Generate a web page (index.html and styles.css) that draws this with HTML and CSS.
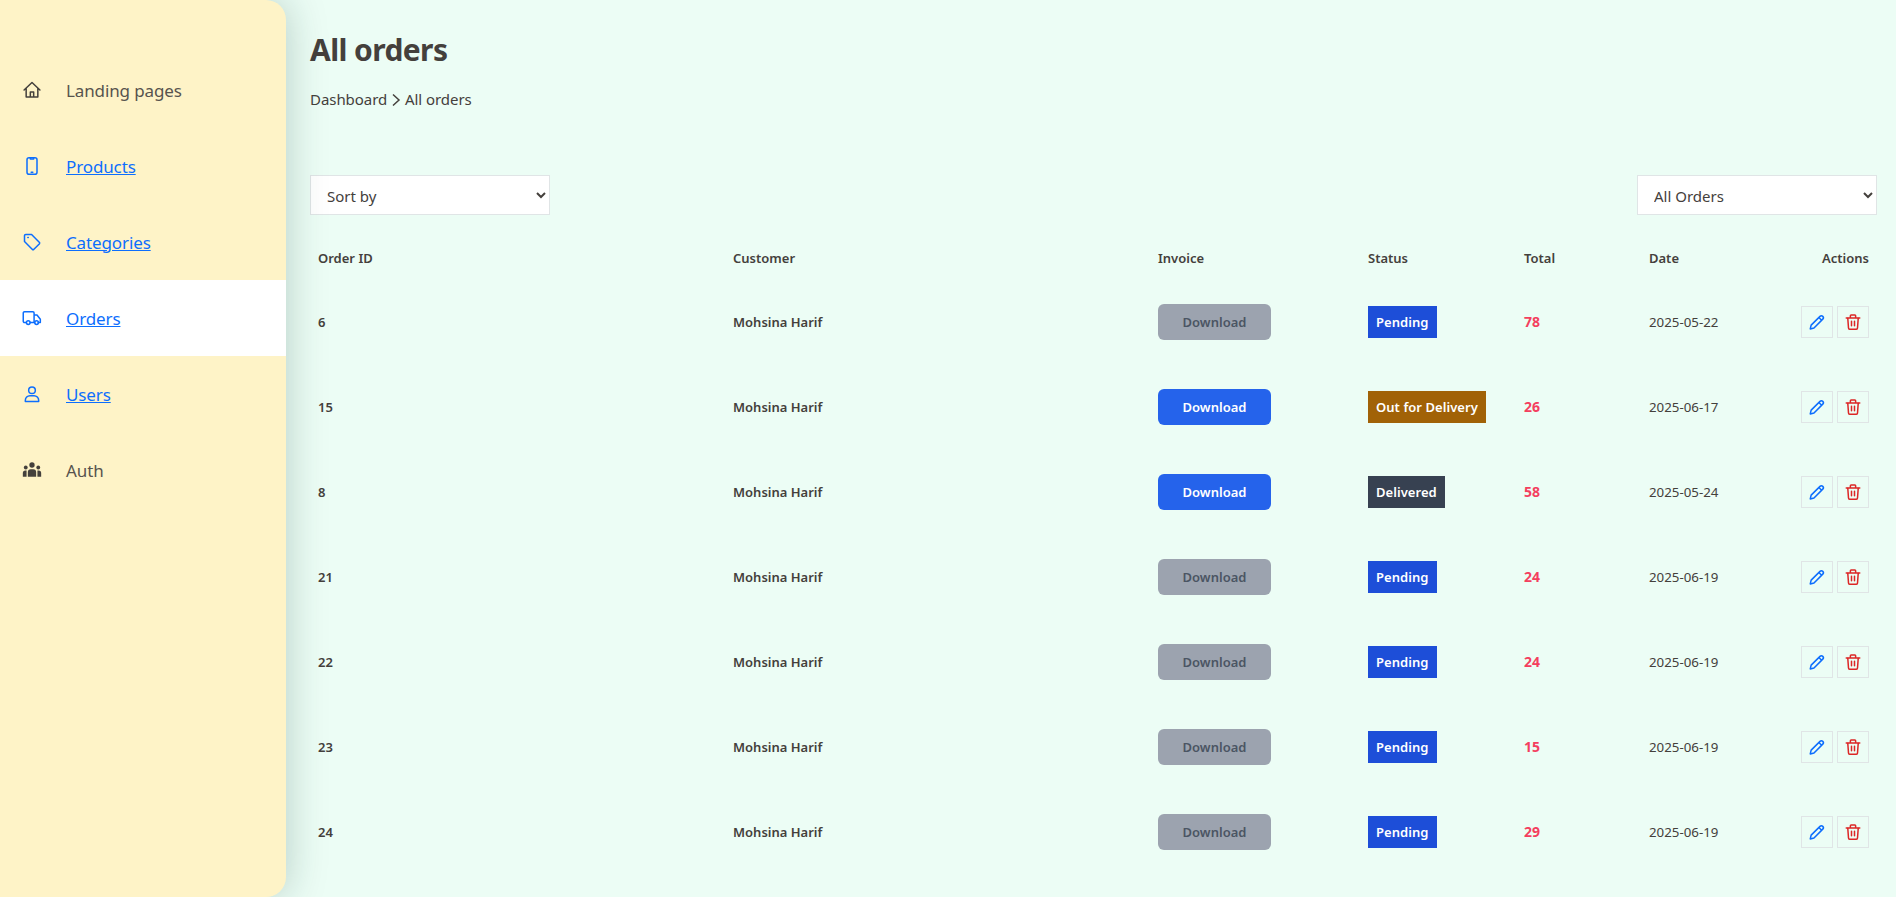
FILE: index.html
```html
<!DOCTYPE html>
<html lang="en">
<head>
    <meta charset="UTF-8">
    <title>All orders</title>
    <link rel="stylesheet" href="styles.css">
</head>
<body>
<svg class="icon-defs" xmlns="http://www.w3.org/2000/svg">
    <symbol id="i-home" viewBox="0 0 24 24"><path d="M2.500 12 12 3l9.500 9M5 10v10.500h14V10M10 20.500V14.500h4v6"/></symbol>
    <symbol id="i-phone" viewBox="0 0 24 24"><rect x="6" y="2" width="12" height="20" rx="2.500"/><path d="M10 2.500v1h4v-1M11 19.500h2"/></symbol>
    <symbol id="i-tag" viewBox="0 0 24 24"><path d="M3 4.500A1.500 1.500 0 0 1 4.500 3h7l9.500 9.500a1.500 1.500 0 0 1 0 1.500L14 21a1.500 1.500 0 0 1-1.500 0L3 11.500zM7 6.500h.5"/></symbol>
    <symbol id="i-truck" viewBox="0 0 24 24"><path d="M5 17.500H3a1.500 1.500 0 0 1-1.500-1.500V6A1.500 1.500 0 0 1 3 4.500h10A1.500 1.500 0 0 1 14.500 6v11.500H10M14.500 8.500H18l4 5v4h-2.500M14.500 17.500H15"/><circle cx="7.500" cy="17.500" r="2.200"/><circle cx="17.500" cy="17.500" r="2.200"/></symbol>
    <symbol id="i-user" viewBox="0 0 24 24"><circle cx="12" cy="7.500" r="4"/><path d="M4 21v-1.500A5.500 5.500 0 0 1 9.500 14h5a5.500 5.500 0 0 1 5.500 5.500V21z"/></symbol>
    <symbol id="i-group" viewBox="0 0 24 24"><circle cx="12" cy="6" r="3.200"/><circle cx="4.500" cy="9" r="2.300"/><circle cx="19.500" cy="9" r="2.300"/><path d="M7 20v-5.500a3.500 3.500 0 0 1 3.500-3.500h3a3.500 3.500 0 0 1 3.500 3.500V20zM1 20v-4.500A3 3 0 0 1 4 12.500h1.500v7.500zM23 20v-4.500a3 3 0 0 0-3-3h-1.500v7.500z"/></symbol>
    <symbol id="i-pencil" viewBox="0 0 24 24"><path d="M16 4.500a2.600 2.600 0 0 1 3.700 3.700L8 20l-5 1.200L4.200 16.200zM14.500 6l3.700 3.700"/></symbol>
    <symbol id="i-trash" viewBox="0 0 24 24"><path d="M3 6.500h18M5 6.500l1 13.500a1.500 1.500 0 0 0 1.500 1.500h9a1.500 1.500 0 0 0 1.500-1.500l1-13.500M8.500 6.500V3.500a1 1 0 0 1 1-1h5a1 1 0 0 1 1 1v3M10 11v6M14 11v6"/></symbol>
</svg>

<div class="layout">
    <aside class="sidebar">
        <ul class="menu">
            <li class="menu-item"><svg class="menu-icon"><use href="#i-home"/></svg><span>Landing pages</span></li>
            <li class="menu-item link"><svg class="menu-icon"><use href="#i-phone"/></svg><a href="#">Products</a></li>
            <li class="menu-item link"><svg class="menu-icon"><use href="#i-tag"/></svg><a href="#">Categories</a></li>
            <li class="menu-item link active"><svg class="menu-icon"><use href="#i-truck"/></svg><a href="#">Orders</a></li>
            <li class="menu-item link"><svg class="menu-icon"><use href="#i-user"/></svg><a href="#">Users</a></li>
            <li class="menu-item"><svg class="menu-icon solid"><use href="#i-group"/></svg><span>Auth</span></li>
        </ul>
    </aside>

    <main class="content">
        <h1 class="title">All orders</h1>
        <p class="crumbs">Dashboard <svg class="crumb-arrow" viewBox="0 0 10 14"><path d="M2 1.500 8 7l-6 5.500"/></svg> All orders</p>

        <div class="filters">
            <select class="filter"><option>Sort by</option></select>
            <select class="filter"><option>All Orders</option></select>
        </div>

        <table class="orders">
            <thead>
                <tr>
                    <th class="c-id">Order ID</th>
                    <th class="c-customer">Customer</th>
                    <th class="c-invoice">Invoice</th>
                    <th class="c-status">Status</th>
                    <th class="c-total">Total</th>
                    <th class="c-date">Date</th>
                    <th class="c-actions">Actions</th>
                </tr>
            </thead>
            <tbody>
                <tr>
                    <td class="strong">6</td><td class="strong">Mohsina Harif</td>
                    <td><button class="download off">Download</button></td>
                    <td><span class="badge pending">Pending</span></td>
                    <td class="total">78</td><td>2025-05-22</td>
                    <td class="c-actions"><button class="act edit"><svg><use href="#i-pencil"/></svg></button><button class="act del"><svg><use href="#i-trash"/></svg></button></td>
                </tr>
                <tr>
                    <td class="strong">15</td><td class="strong">Mohsina Harif</td>
                    <td><button class="download">Download</button></td>
                    <td><span class="badge out">Out for Delivery</span></td>
                    <td class="total">26</td><td>2025-06-17</td>
                    <td class="c-actions"><button class="act edit"><svg><use href="#i-pencil"/></svg></button><button class="act del"><svg><use href="#i-trash"/></svg></button></td>
                </tr>
                <tr>
                    <td class="strong">8</td><td class="strong">Mohsina Harif</td>
                    <td><button class="download">Download</button></td>
                    <td><span class="badge delivered">Delivered</span></td>
                    <td class="total">58</td><td>2025-05-24</td>
                    <td class="c-actions"><button class="act edit"><svg><use href="#i-pencil"/></svg></button><button class="act del"><svg><use href="#i-trash"/></svg></button></td>
                </tr>
                <tr>
                    <td class="strong">21</td><td class="strong">Mohsina Harif</td>
                    <td><button class="download off">Download</button></td>
                    <td><span class="badge pending">Pending</span></td>
                    <td class="total">24</td><td>2025-06-19</td>
                    <td class="c-actions"><button class="act edit"><svg><use href="#i-pencil"/></svg></button><button class="act del"><svg><use href="#i-trash"/></svg></button></td>
                </tr>
                <tr>
                    <td class="strong">22</td><td class="strong">Mohsina Harif</td>
                    <td><button class="download off">Download</button></td>
                    <td><span class="badge pending">Pending</span></td>
                    <td class="total">24</td><td>2025-06-19</td>
                    <td class="c-actions"><button class="act edit"><svg><use href="#i-pencil"/></svg></button><button class="act del"><svg><use href="#i-trash"/></svg></button></td>
                </tr>
                <tr>
                    <td class="strong">23</td><td class="strong">Mohsina Harif</td>
                    <td><button class="download off">Download</button></td>
                    <td><span class="badge pending">Pending</span></td>
                    <td class="total">15</td><td>2025-06-19</td>
                    <td class="c-actions"><button class="act edit"><svg><use href="#i-pencil"/></svg></button><button class="act del"><svg><use href="#i-trash"/></svg></button></td>
                </tr>
                <tr>
                    <td class="strong">24</td><td class="strong">Mohsina Harif</td>
                    <td><button class="download off">Download</button></td>
                    <td><span class="badge pending">Pending</span></td>
                    <td class="total">29</td><td>2025-06-19</td>
                    <td class="c-actions"><button class="act edit"><svg><use href="#i-pencil"/></svg></button><button class="act del"><svg><use href="#i-trash"/></svg></button></td>
                </tr>
            </tbody>
        </table>
    </main>
</div>
</body>
</html>
```

FILE: styles.css
```css
*{
    margin:0;
    padding:0;
    box-sizing:border-box;
}
html,body{
    width:100%;
    height:100%;
    overflow:hidden;
}
body{
    background:#ecfdf5;
    color:#44403c;
    font-family:"Noto Sans","Open Sans",sans-serif;
    font-size:14px;
}
.icon-defs{
    display:none;
}
.layout{
    display:flex;
    height:100%;
}

/* sidebar */
.sidebar{
    flex:0 0 286px;
    height:100%;
    padding-top:52px;
    background:#fef3c7;
    border-radius:0 20px 20px 0;
    box-shadow:0 0 40px rgba(17,60,50,.25);
    position:relative;
    z-index:2;
}
.menu{
    list-style:none;
}
.menu-item{
    display:flex;
    align-items:center;
    height:76px;
    padding-left:22px;
    font-size:17px;
    letter-spacing:-.12px;
    color:#57534e;
}
.menu-item a{
    color:#0d6efd;
    text-decoration:underline;
}
.menu-item.link{
    color:#0d6efd;
}
.menu-item.active{
    background:#fff;
}
.menu-icon{
    width:20px;
    height:20px;
    margin-right:24px;
    fill:none;
    stroke:currentColor;
    stroke-width:1.800;
    stroke-linejoin:round;
    stroke-linecap:round;
}
.menu-item:first-child .menu-icon{
    color:#44403c;
}
.menu-icon.solid{
    fill:#44403c;
    stroke:none;
}

/* main */
.content{
    flex:1;
    padding:30px 19px 0 24px;
    min-width:0;
}
.title{
    font-size:30px;
    line-height:40px;
    font-weight:700;
    letter-spacing:-.6px;
    color:#44403c;
}
.crumbs{
    margin-top:18px;
    font-size:15px;
    line-height:22px;
    letter-spacing:-.05px;
}
.crumb-arrow{
    width:10px;
    height:14px;
    vertical-align:-2px;
    fill:none;
    stroke:#44403c;
    stroke-width:1.500;
}
.filters{
    display:flex;
    justify-content:space-between;
    margin-top:65px;
}
.filter{
    width:240px;
    height:40px;
    padding:2px 12px 0;
    background:#fff;
    border:1px solid #e0e5e6;
    color:#44403c;
    font:15px "Noto Sans","Open Sans",sans-serif;
}

/* table */
.orders{
    width:100%;
    margin-top:22px;
    border-collapse:collapse;
    table-layout:fixed;
}
.orders th{
    height:42px;
    padding:0 8px;
    font-size:13px;
    font-weight:600;
    text-align:left;
}
.orders td{
    height:85px;
    padding:0 8px;
    font-size:13.300px;
}
.c-id{width:415px;}
.c-customer{width:425px;}
.c-invoice{width:210px;}
.c-status{width:156px;}
.c-total{width:125px;}
.orders .c-date{
    width:104px;
}
.orders .c-actions{
    text-align:right;
}
.orders .strong{
    font-size:13px;
    font-weight:600;
}
.orders .total{
    color:#f43f5e;
    font-size:14px;
    font-weight:700;
}
.download{
    width:113px;
    height:36px;
    border:0;
    border-radius:6px;
    background:#2563eb;
    color:#fff;
    font:600 13px "Noto Sans","Open Sans",sans-serif;
}
.download.off{
    background:#9ca3af;
    color:#4b5563;
}
.badge{
    display:inline-block;
    height:32px;
    padding:0 8px;
    color:#fff;
    font-size:13px;
    font-weight:600;
    letter-spacing:.05px;
    line-height:32px;
}
.pending{background:#1d4ed8;}
.out{background:#a16207;}
.delivered{background:#374151;}
.act{
    display:inline-flex;
    align-items:center;
    justify-content:center;
    width:32px;
    height:32px;
    margin-left:4px;
    background:transparent;
    border:1px solid #e0e5e6;
    vertical-align:middle;
}
.act svg{
    width:18px;
    height:18px;
    fill:none;
    stroke:currentColor;
    stroke-width:2;
    stroke-linejoin:round;
    stroke-linecap:round;
}
.edit{color:#0d6efd;}
.del{color:#dc2626;}
```
